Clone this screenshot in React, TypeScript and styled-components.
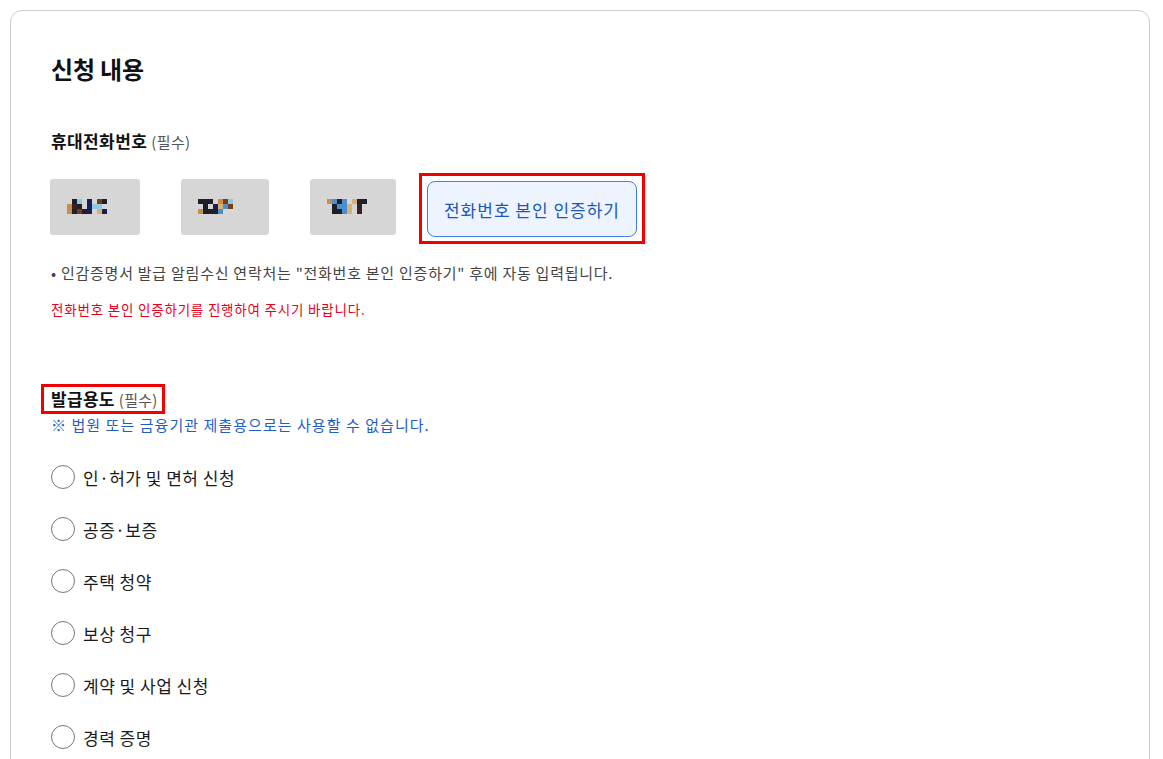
import React from "react";
import styled, { createGlobalStyle } from "styled-components";

const GlobalStyle = createGlobalStyle`
  html, body {
    margin: 0;
    padding: 0;
    background: #fff;
    overflow: hidden;
  }
  body {
    font-family: "Noto Sans CJK KR", "Noto Sans", sans-serif;
    color: #111;
  }
`;

const Card = styled.section`
  box-sizing: border-box;
  width: 1140px;
  min-height: 820px;
  margin: 10px 0 0 10px;
  padding: 42px 40px 40px 40px;
  border: 1px solid #cccccc;
  border-radius: 12px;
`;

const Title = styled.h2`
  margin: 0;
  font-size: 24px;
  line-height: 32px;
  font-weight: 700;
  letter-spacing: -0.2px;
  color: #111;
`;

const FieldLabel = styled.div`
  margin-top: 44px;
  font-size: 17px;
  line-height: 24px;
  font-weight: 700;
  letter-spacing: 0.4px;
  color: #111;
`;

const Required = styled.span`
  margin-left: 4px;
  font-size: 15px;
  font-weight: 400;
  color: #555;
`;

const PhoneRow = styled.div`
  display: flex;
  align-items: center;
  margin-top: 19px;
`;

const PhoneFields = styled.div`
  display: flex;
  gap: 41px;
  margin-left: -1px;
  padding-bottom: 4px;
`;

const MaskedField = styled.div<{ $w: number }>`
  box-sizing: border-box;
  width: ${({ $w }) => $w}px;
  height: 56px;
  padding-left: 17px;
  display: flex;
  align-items: center;
  background: #d6d6d6;
  border-radius: 3px;
`;

const Highlight = styled.div`
  border: 3px solid #f00000;
`;

const VerifyFrame = styled(Highlight)`
  margin-left: 23px;
  padding: 5px 5px 4px;
`;

const VerifyButton = styled.button`
  width: 210px;
  height: 56px;
  border: 1px solid #3f7fe6;
  border-radius: 8px;
  background: #edf4ff;
  color: #1c56b8;
  font-family: inherit;
  font-size: 17px;
  letter-spacing: 1px;
  cursor: pointer;
`;

const Note = styled.p`
  margin: 18px 0 0;
  font-size: 15px;
  line-height: 22px;
  letter-spacing: 0.75px;
  color: #444;
`;

const Warning = styled.p`
  margin: 15px 0 0;
  font-size: 13.5px;
  line-height: 20px;
  letter-spacing: 0.8px;
  color: #e8001c;
`;

const UsageLabel = styled(Highlight)`
  display: inline-block;
  margin: 65px 0 0 -10px;
  padding: 0 4px 0 7px;
  font-size: 17px;
  line-height: 23px;
  font-weight: 700;
  letter-spacing: 0.3px;
  color: #111;
`;

const Notice = styled.p`
  margin: 0;
  font-size: 15px;
  line-height: 22px;
  letter-spacing: 1.05px;
  color: #1f5ec4;
`;

const RadioList = styled.div`
  margin-top: 15px;
  display: flex;
  flex-direction: column;
`;

const RadioRow = styled.label`
  display: flex;
  align-items: center;
  gap: 8px;
  height: 52px;
  font-size: 17px;
  letter-spacing: 0.5px;
  color: #1a1a1a;
  cursor: pointer;
`;

const RadioInput = styled.input`
  appearance: none;
  margin: 0;
  width: 24px;
  height: 24px;
  border: 1.5px solid #767676;
  border-radius: 50%;
  background: #fff;
`;

const palette: Record<string, string> = {
  k: "#1f1f2a",
  n: "#1c1c5c",
  o: "#c88f4a",
  t: "#d8b272",
  b: "#8fc9df",
  B: "#4a8fd0",
  r: "#7a3a1c",
  d: "#3a2020",
};

const masks: { w: number; rows: string[] }[] = [
  { w: 90, rows: [".kb.n.rk", "odk.nbb.", "okrkn.tn"] },
  { w: 88, rows: ["kkk.orb", ".k.ntBr.", "okkkB..."] },
  { w: 86, rows: ["oBkB.tkk", ".kBBt.d.", ".kkBt.d."] },
];

const PixelMask = ({ rows }: { rows: string[] }) => {
  const cell = 5;
  return (
    <svg width={rows[0].length * cell} height={rows.length * cell} shapeRendering="crispEdges">
      {rows.map((row, y) =>
        row.split("").map((c, x) =>
          palette[c] ? (
            <rect key={`${x}-${y}`} x={x * cell} y={y * cell} width={cell} height={cell} fill={palette[c]} />
          ) : null
        )
      )}
    </svg>
  );
};

const usages = [
  "인·허가 및 면허 신청",
  "공증·보증",
  "주택 청약",
  "보상 청구",
  "계약 및 사업 신청",
  "경력 증명",
];

export default function App() {
  return (
    <>
      <GlobalStyle />
      <Card>
        <Title>신청 내용</Title>

        <FieldLabel>
          휴대전화번호<Required>(필수)</Required>
        </FieldLabel>
        <PhoneRow>
          <PhoneFields>
            {masks.map((m, i) => (
              <MaskedField key={i} $w={m.w}>
                <PixelMask rows={m.rows} />
              </MaskedField>
            ))}
          </PhoneFields>
          <VerifyFrame>
            <VerifyButton type="button">전화번호 본인 인증하기</VerifyButton>
          </VerifyFrame>
        </PhoneRow>
        <Note>• 인감증명서 발급 알림수신 연락처는 "전화번호 본인 인증하기" 후에 자동 입력됩니다.</Note>
        <Warning>전화번호 본인 인증하기를 진행하여 주시기 바랍니다.</Warning>

        <UsageLabel>
          발급용도<Required>(필수)</Required>
        </UsageLabel>
        <Notice>※ 법원 또는 금융기관 제출용으로는 사용할 수 없습니다.</Notice>
        <RadioList>
          {usages.map((u) => (
            <RadioRow key={u}>
              <RadioInput type="radio" name="usage" value={u} />
              {u}
            </RadioRow>
          ))}
        </RadioList>
      </Card>
    </>
  );
}
